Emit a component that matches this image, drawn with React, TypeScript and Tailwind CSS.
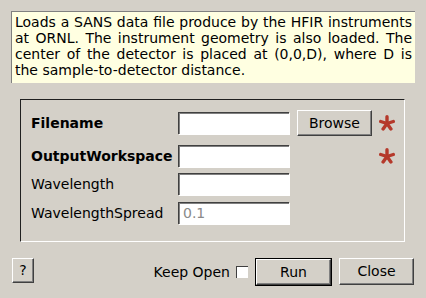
import React from "react";

const Star = () => (
  <svg width="16" height="16" viewBox="0 0 16 16">
    <g stroke="#b5392b" strokeWidth="3.4" strokeLinecap="round">
      <line x1="8" y1="8.5" x2="8" y2="1.8" />
      <line x1="8" y1="8.5" x2="14.3" y2="6.5" />
      <line x1="8" y1="8.5" x2="11.9" y2="13.9" />
      <line x1="8" y1="8.5" x2="4.1" y2="13.9" />
      <line x1="8" y1="8.5" x2="1.7" y2="6.5" />
    </g>
  </svg>
);

const Input = ({ value }: { value?: string }) => (
  <div className="w-[111px] h-[22px] bg-white border-t border-l border-[#404040] border-r-white border-b-white shadow-[inset_1px_1px_0_#808080,1px_1px_0_#ffffff] flex items-center pl-[4px] text-[#8a8a8a]">
    {value}
  </div>
);

const Btn = ({ children, cls }: { children: React.ReactNode; cls: string }) => (
  <div
    className={`flex items-center justify-center bg-[#d4d0c8] border-t border-l border-white border-r border-b border-r-[#404040] border-b-[#404040] shadow-[inset_-1px_-1px_0_#808080] ${cls}`}
  >
    {children}
  </div>
);

export default function App() {
  return (
    <div
      className="w-[426px] h-[298px] bg-[#d4d0c8] text-black text-[14px] overflow-hidden"
      style={{ fontFamily: '"DejaVu Sans", sans-serif' }}
    >
      <div className="pt-[11px] pl-[11px]">
        <div className="w-[404px] h-[72px] bg-[#ffffe1] border-t border-l border-[#808080] border-r-white border-b-white px-[3px] pt-[2px] leading-[16px] text-justify">
          Loads a SANS data file produce by the HFIR instruments at ORNL. The instrument geometry is also loaded. The center of the detector is placed at (0,0,D), where D is the sample-to-detector distance.
        </div>
      </div>

      <div className="ml-[20px] mt-[16px] w-[385px] h-[143px] border-t border-l border-[#202020] border-r border-b border-r-white border-b-white pt-[10px] pl-[10px]">
        <div className="flex items-center h-[26px]">
          <div className="w-[147px] font-bold">Filename</div>
          <Input />
          <Btn cls="ml-[8px] w-[75px] h-[26px]">Browse</Btn>
          <div className="ml-[7px]"><Star /></div>
        </div>
        <div className="flex items-center h-[26px] mt-[7px]">
          <div className="w-[147px] font-bold">OutputWorkspace</div>
          <Input />
          <div className="ml-[90px]"><Star /></div>
        </div>
        <div className="flex items-center h-[26px] mt-[2px]">
          <div className="w-[147px]">Wavelength</div>
          <Input />
        </div>
        <div className="flex items-center h-[26px] mt-[3px]">
          <div className="w-[147px]">WavelengthSpread</div>
          <Input value="0.1" />
        </div>
      </div>

      <div className="flex items-start mt-[16px] px-[12px]">
        <Btn cls="w-[22px] h-[25px]">?</Btn>
        <div className="flex-1" />
        <div className="h-[28px] flex items-center">Keep Open</div>
        <div className="ml-[6px] mt-[8px] w-[12px] h-[12px] bg-white border-t border-l border-[#404040] border-r-white border-b-white" />
        <div className="ml-[7px] border border-black">
          <Btn cls="w-[75px] h-[26px]">Run</Btn>
        </div>
        <Btn cls="ml-[7px] w-[75px] h-[27px]">Close</Btn>
      </div>
    </div>
  );
}
